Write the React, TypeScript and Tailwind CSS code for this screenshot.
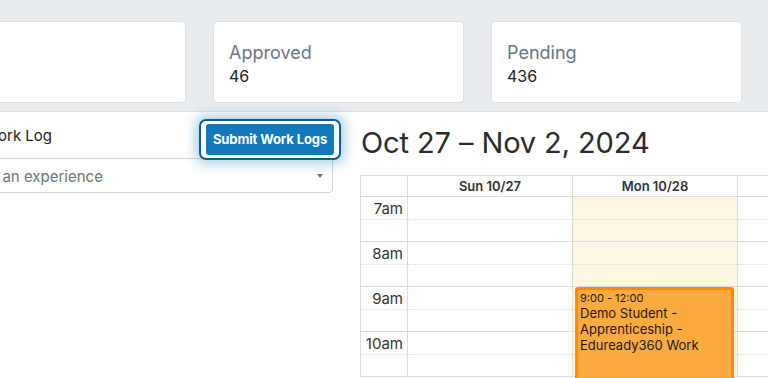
const slots = ["7am", "8am", "9am", "10am"];

function Slot({ label, today }: { label?: string; today?: boolean }) {
  return (
    <div className={`h-[45px] border-b border-[#ddd] ${today ? "bg-[#fcf8e3]" : ""}`}>
      <div className="h-[23px] border-b border-dotted border-[#ddd] flex justify-end items-start pr-[4px]">
        {label && <span className="text-[15px] leading-[15px] mt-[4px] text-[#333]">{label}</span>}
      </div>
    </div>
  );
}

function StatCard({ title, value }: { title: string; value: string }) {
  return (
    <div className="w-[251px] h-[82px] shrink-0 bg-white border border-[#dee2e6] rounded-[4px] px-[15px] pt-[19px]">
      <div className="text-[18px] leading-[24px] text-[#6b7785]">{title}</div>
      <div className="text-[16px] leading-[22px] text-[#222]">{value}</div>
    </div>
  );
}

export default function App() {
  return (
    <div
      className="w-[768px] h-[378px] overflow-hidden bg-white"
      style={{ fontFamily: "Inter, 'Open Sans', sans-serif" }}
    >
      <div className="h-[112px] bg-[#e9ecef] border-b border-[#dde1e5] pt-[21px]">
        <div className="flex gap-[27px] ml-[-65px]">
          <StatCard title="" value="" />
          <StatCard title="Approved" value="46" />
          <StatCard title="Pending" value="436" />
        </div>
      </div>

      <div className="flex">
        <div className="w-[393px] ml-[-60px] shrink-0 pt-[7px]">
          <div className="flex items-center justify-between mr-[-8px]">
            <span className="pl-[44px] text-[15px] text-[#222] mt-[-6px]">Work Log</span>
            <div className="rounded-[7px] border-2 border-[#0b5f94] bg-white px-[5px] py-[3px] shadow-[0_0_12px_4px_rgba(30,120,190,0.35)]">
              <button className="h-[31px] w-[128px] rounded-[3px] bg-[#1479b8] text-white text-[13px] font-bold tracking-[-0.1px]">
                Submit Work Logs
              </button>
            </div>
          </div>
          <div className="mt-[-2px] h-[35px] border border-[#ced4da] rounded-[4px] flex items-center justify-between pl-[13px] pr-[9px]">
            <span className="text-[15px] text-[#6c757d] mt-[3px]">Select an experience</span>
            <span className="w-0 h-0 border-l-[3.5px] border-r-[3.5px] border-t-[4px] border-l-transparent border-r-transparent border-t-[#777]" />
          </div>
        </div>

        <div className="ml-[27px] flex-1 pt-[13px]">
          <h1 className="text-[29px] leading-[36px] text-[#2b2b2b] ml-[1px] tracking-[-0.1px]">Oct 27 – Nov 2, 2024</h1>
          <div className="mt-[14px] border-l border-t border-[#ddd] w-[440px]">
            <div className="flex h-[21px] border-b border-[#ddd] text-[13px] font-semibold text-[#333]">
              <div className="w-[47px] border-r border-[#ddd]" />
              <div className="w-[165px] border-r border-[#ddd] text-center leading-[20px]">Sun 10/27</div>
              <div className="w-[165px] border-r border-[#ddd] text-center leading-[20px]">Mon 10/28</div>
              <div className="flex-1" />
            </div>
            <div className="flex">
              <div className="w-[47px] border-r border-[#ddd]">
                {slots.map((s) => (
                  <Slot key={s} label={s} />
                ))}
              </div>
              <div className="w-[165px] border-r border-[#ddd]">
                {slots.map((s) => (
                  <Slot key={s} />
                ))}
              </div>
              <div className="w-[165px] border-r border-[#ddd] relative">
                {slots.map((s) => (
                  <Slot key={s} today />
                ))}
                <div className="absolute left-[2px] right-[3px] top-[90px] h-[140px] bg-[#fbaa40] border-[3px] border-[#ff8c00] rounded-[3px] px-[2px] text-[#1a1a1a]">
                  <div className="text-[11px] leading-[14px] mt-[1px]">9:00 - 12:00</div>
                  <div className="text-[13px] leading-[16px]">Demo Student - Apprenticeship - Eduready360 Work</div>
                </div>
              </div>
              <div className="flex-1">
                {slots.map((s) => (
                  <Slot key={s} />
                ))}
              </div>
            </div>
          </div>
        </div>
      </div>
    </div>
  );
}
